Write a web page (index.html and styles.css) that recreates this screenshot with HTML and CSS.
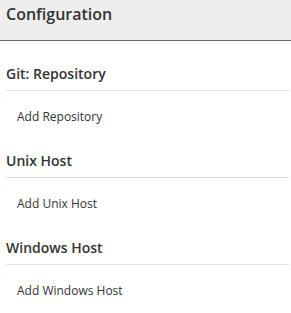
FILE: index.html
```html
<!DOCTYPE html>
<html lang="en">
<head>
    <meta charset="UTF-8">
    <title>Configuration</title>
    <link rel="stylesheet" href="styles.css">
</head>
<body>
<div class="header">
    <h1>Configuration</h1>
</div>

<div class="section">
    <h2>Git: Repository</h2>
    <div class="dot"></div>
    <div class="item">Add Repository</div>
</div>

<div class="section">
    <h2>Unix Host</h2>
    <div class="dot"></div>
    <div class="item">Add Unix Host</div>
</div>

<div class="section">
    <h2>Windows Host</h2>
    <div class="dot"></div>
    <div class="item">Add Windows Host</div>
</div>
</body>
</html>
```

FILE: styles.css
```css
body {
    margin: 0;
    font-family: 'Open Sans', sans-serif;
    color: #333;
    background: #fff;
}

.header {
    height: 40px;
    background-color: #eee;
    border-bottom: 1px solid #6b6b6b;
    padding: 0 6px;
}

h1 {
    margin: 0;
    padding-top: 3px;
    font-size: 16px;
    line-height: 22px;
    font-weight: 600;
}

.section {
    padding: 0 2px 2px 6px;
}

h2 {
    margin: 23px 0 0 0;
    padding-bottom: 6px;
    font-size: 14px;
    line-height: 20px;
    font-weight: 600;
    border-bottom: 1px solid #e0e0e0;
}

.dot {
    width: 1px;
    height: 1px;
    margin-top: 9px;
    background: #ccc;
}

.item {
    margin-top: 7px;
    padding-left: 11px;
    font-size: 12px;
    line-height: 18px;
}
```
